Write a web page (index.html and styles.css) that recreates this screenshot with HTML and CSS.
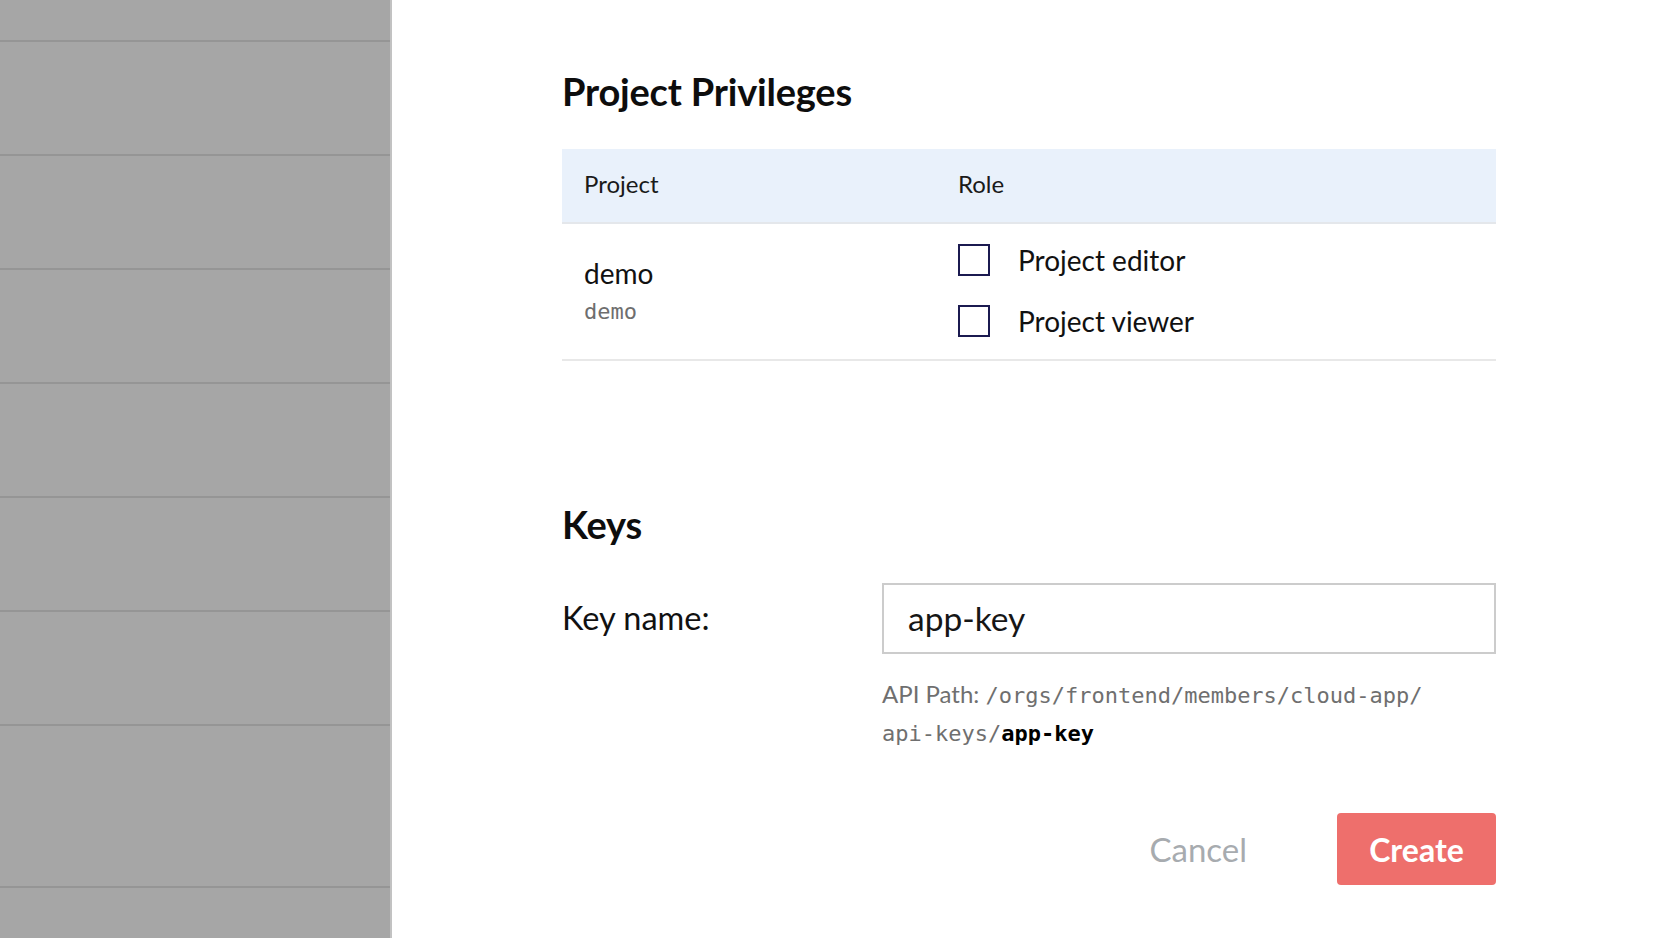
FILE: index.html
```html
<!DOCTYPE html>
<html lang="en">
<head>
<meta charset="utf-8">
<title>Project Privileges</title>
<link rel="stylesheet" href="styles.css">
</head>
<body>
<aside class="backdrop">
  <div class="strip strip-first"></div>
  <div class="strip"></div>
  <div class="strip"></div>
  <div class="strip"></div>
  <div class="strip"></div>
  <div class="strip"></div>
  <div class="strip"></div>
  <div class="strip strip-tall"></div>
  <div class="strip strip-last"></div>
</aside>
<main class="panel">
  <div class="content">
    <h2 class="section-title">Project Privileges</h2>
    <div class="table">
      <div class="thead">
        <div class="col-project">Project</div>
        <div class="col-role">Role</div>
      </div>
      <div class="trow">
        <div class="col-project cell-project">
          <div class="proj-name">demo</div>
          <div class="proj-id">demo</div>
        </div>
        <div class="col-role cell-role">
          <label class="option"><span class="checkbox"></span><span class="option-label">Project editor</span></label>
          <label class="option"><span class="checkbox"></span><span class="option-label">Project viewer</span></label>
        </div>
      </div>
    </div>

    <h2 class="section-title keys-title">Keys</h2>
    <div class="field">
      <div class="field-label">Key name:</div>
      <div class="field-body">
        <div class="input">app-key</div>
        <p class="api-path"><span class="api-label">API Path: </span><span class="mono">/orgs/frontend/members/cloud-app/</span><br><span class="mono">api-keys/<b>app-key</b></span></p>
      </div>
    </div>

    <div class="actions">
      <button class="btn-cancel" type="button">Cancel</button>
      <button class="btn-create" type="button">Create</button>
    </div>
  </div>
</main>
</body>
</html>
```
FILE: styles.css
```css
html, body {
  margin: 0;
  padding: 0;
  height: 100%;
}
body {
  display: flex;
  width: 1658px;
  height: 938px;
  overflow: hidden;
  font-family: "Lato", "Noto Sans", sans-serif;
  color: #111;
  background: #fff;
}
.backdrop {
  width: 390px;
  flex: none;
  background: #a6a6a6;
  border-right: 2px solid #c2c2c2;
  display: flex;
  flex-direction: column;
}
.strip {
  height: 112px;
  border-bottom: 2px solid #959595;
  flex: none;
}
.strip-first { height: 40px; }
.strip-tall { height: 160px; }
.strip-last { border-bottom: none; flex: 1; }

.panel {
  flex: 1;
  padding: 69px 0 0 170px;
}
.content {
  width: 934px;
}
.section-title {
  margin: 0;
  font-size: 38px;
  line-height: 44px;
  font-weight: 700;
  color: #0d0d0d;
  letter-spacing: -0.2px;
}
.table {
  margin-top: 36px;
}
.thead {
  display: flex;
  align-items: center;
  box-sizing: border-box;
  height: 75px;
  padding-bottom: 4px;
  background: #e9f1fb;
  border-bottom: 2px solid #e4e7eb;
  font-size: 24px;
  color: #1a1a1a;
}
.col-project {
  box-sizing: border-box;
  width: 374px;
  padding-left: 22px;
  flex: none;
}
.col-role {
  box-sizing: border-box;
  flex: 1;
  padding-left: 22px;
}
.trow {
  display: flex;
  height: 135px;
  border-bottom: 2px solid #e8e8e8;
}
.cell-project {
  padding-top: 31px;
}
.proj-name {
  font-size: 28px;
  line-height: 36px;
  color: #111;
}
.proj-id {
  margin-top: 6px;
  font-family: "DejaVu Sans Mono", "Liberation Mono", monospace;
  font-size: 22px;
  line-height: 30px;
  color: #6e6e6e;
}
.cell-role {
  display: flex;
  flex-direction: column;
  gap: 29px;
  padding-top: 20px;
}
.option {
  display: flex;
  align-items: center;
  height: 32px;
}
.checkbox {
  width: 32px;
  height: 32px;
  box-sizing: border-box;
  border: 2px solid #1b1a50;
  background: #fff;
  flex: none;
}
.option-label {
  margin-left: 28px;
  font-size: 28px;
  color: #111;
}
.keys-title {
  margin-top: 141px;
}
.field {
  display: flex;
  margin-top: 37px;
}
.field-label {
  width: 320px;
  flex: none;
  height: 71px;
  line-height: 69px;
  font-size: 32.5px;
  color: #111;
}
.field-body {
  flex: 1;
}
.input {
  box-sizing: border-box;
  height: 71px;
  border: 2px solid #cccccc;
  padding-left: 24px;
  line-height: 66px;
  font-size: 33.5px;
  color: #161616;
}
.api-path {
  margin: 21px 0 0;
  line-height: 37px;
  color: #6f6f6f;
}
.api-label {
  font-size: 24px;
}
.mono {
  font-family: "DejaVu Sans Mono", "Liberation Mono", monospace;
  font-size: 22px;
}
.mono b {
  color: #000;
  font-weight: 700;
}
.actions {
  display: flex;
  justify-content: flex-end;
  margin-top: 60px;
}
.btn-cancel, .btn-create {
  font-family: "Lato", "Noto Sans", sans-serif;
  height: 72px;
  border: none;
  cursor: pointer;
}
.btn-cancel {
  font-size: 33px;
  background: transparent;
  color: #a7abaf;
  padding: 0 0 0 45px;
  margin-right: 90px;
}
.btn-create {
  font-size: 32px;
  width: 159px;
  background: #ee6f6c;
  color: #fff;
  font-weight: 700;
  border-radius: 4px;
}
```
